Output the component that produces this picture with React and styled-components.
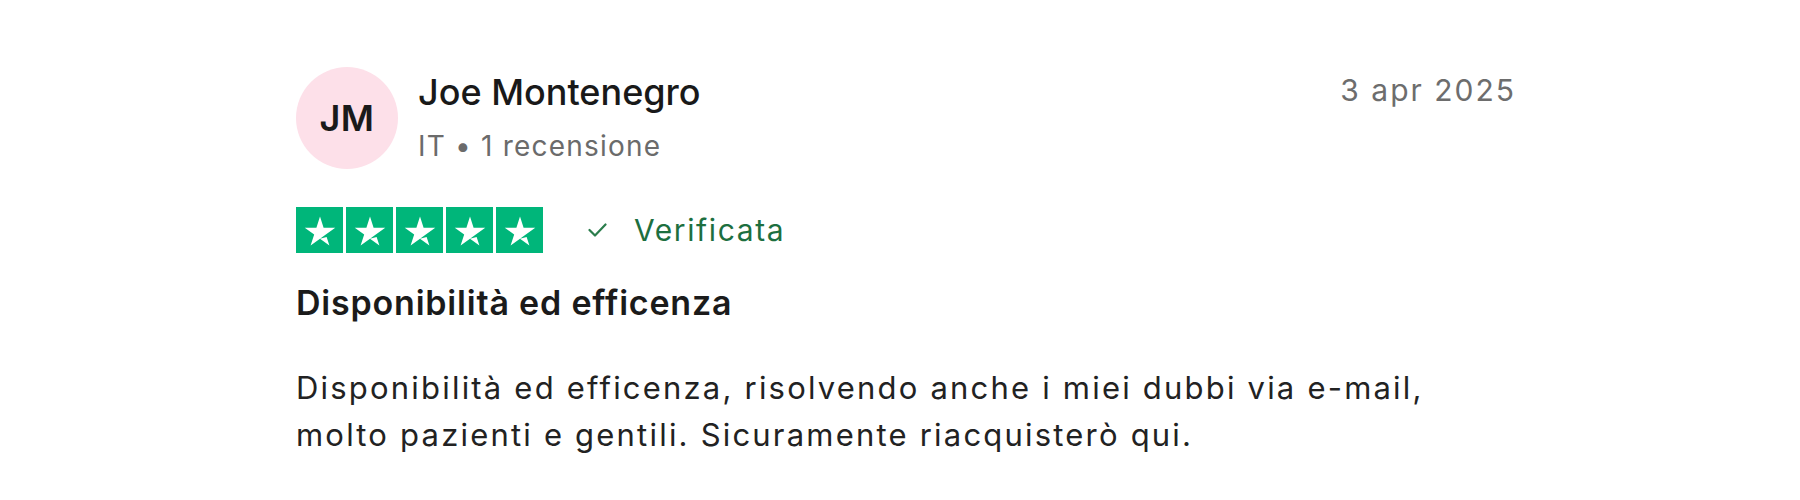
import React from "react";
import styled, { createGlobalStyle } from "styled-components";

const GlobalStyle = createGlobalStyle`
  body {
    margin: 0;
    background: #fff;
    font-family: Inter, "Noto Sans", "Liberation Sans", sans-serif;
    color: #1b1b1b;
  }
`;

const review = {
  initials: "JM",
  name: "Joe Montenegro",
  country: "IT",
  reviews: "1 recensione",
  date: "3 apr 2025",
  rating: 5,
  title: "Disponibilità ed efficenza",
  body: "Disponibilità ed efficenza, risolvendo anche i miei dubbi via e-mail, molto pazienti e gentili. Sicuramente riacquisterò qui.",
};

const Card = styled.article`
  width: 1220px;
  margin-left: 296px;
  padding-top: 67px;
  display: flex;
  flex-direction: column;
`;

const Header = styled.header`
  display: flex;
  align-items: flex-start;
  gap: 20px;
`;

const Avatar = styled.div`
  width: 102px;
  height: 102px;
  border-radius: 50%;
  background: #fde0e9;
  display: flex;
  align-items: center;
  justify-content: center;
  font-size: 36px;
  font-weight: 600;
  letter-spacing: 0.5px;
  color: #1a1a1a;
  flex-shrink: 0;
`;

const Who = styled.div`
  display: flex;
  flex-direction: column;
  gap: 14px;
  padding-top: 4px;
  flex: 1;
`;

const Name = styled.div`
  font-size: 36px;
  line-height: 1.2;
  font-weight: 500;
  color: #191919;
`;

const Meta = styled.div`
  font-size: 28px;
  line-height: 1.3;
  letter-spacing: 1.2px;
  color: #6b6b6b;
`;

const DateText = styled.time`
  font-size: 30px;
  line-height: 1.2;
  letter-spacing: 2px;
  color: #6d6d6d;
  padding-top: 5px;
`;

const RatingRow = styled.div`
  display: flex;
  align-items: center;
  margin-top: 38px;
  gap: 45px;
`;

const Stars = styled.div`
  display: flex;
  gap: 3px;
`;

const StarBox = styled.span`
  width: 47px;
  height: 46px;
  background: ${(p) => (p.$on ? "#00b67a" : "#dcdce6")};
  display: flex;
  align-items: center;
  justify-content: center;
`;

const Verified = styled.span`
  display: flex;
  align-items: center;
  gap: 27px;
  font-size: 30px;
  letter-spacing: 1.6px;
  color: #1d6f3f;
`;

const Title = styled.h2`
  margin: 28px 0 0;
  font-size: 34px;
  line-height: 1.3;
  font-weight: 600;
  letter-spacing: 0.8px;
  color: #1b1b1b;
`;

const Body = styled.p`
  margin: 39px 0 0;
  max-width: 1160px;
  font-size: 31px;
  line-height: 47px;
  letter-spacing: 2.2px;
  color: #222;
`;

const Star = () => (
  <svg width="42" height="40" viewBox="0 0 46 44" aria-hidden="true">
    <path
      fill="#fff"
      d="M23 31.5l7.3-1.9 3.05 9.4L23 31.5zM39.8 19.4H26.95L23 7.2l-3.95 12.2H6.2l10.4 7.55-3.95 12.2L23 31.6l6.4-4.65 10.4-7.55z"
    />
  </svg>
);

const Check = () => (
  <svg width="19" height="14" viewBox="0 0 19 14" aria-hidden="true">
    <polyline
      points="1.5,7 7,12.5 17.5,1.5"
      fill="none"
      stroke="#2b7d4c"
      strokeWidth="2.2"
      strokeLinecap="round"
      strokeLinejoin="round"
    />
  </svg>
);

export default function App() {
  return (
    <>
      <GlobalStyle />
      <Card>
        <Header>
          <Avatar>{review.initials}</Avatar>
          <Who>
            <Name>{review.name}</Name>
            <Meta>
              {review.country} • {review.reviews}
            </Meta>
          </Who>
          <DateText>{review.date}</DateText>
        </Header>
        <RatingRow>
          <Stars>
            {[1, 2, 3, 4, 5].map((n) => (
              <StarBox key={n} $on={n <= review.rating}>
                <Star />
              </StarBox>
            ))}
          </Stars>
          <Verified>
            <Check />
            Verificata
          </Verified>
        </RatingRow>
        <Title>{review.title}</Title>
        <Body>{review.body}</Body>
      </Card>
    </>
  );
}
